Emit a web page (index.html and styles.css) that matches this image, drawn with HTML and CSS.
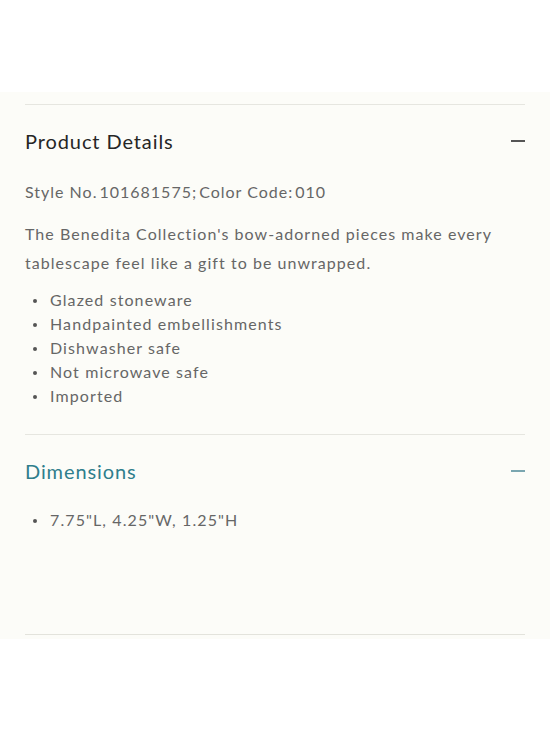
FILE: index.html
```html
<!DOCTYPE html>
<html>
<head>
<meta charset="utf-8">
<link rel="stylesheet" href="styles.css">
</head>
<body>
<div class="top"></div>
<div class="panel">
  <section class="acc acc-first">
    <div class="acc-head">
      <h2 class="acc-title">Product Details</h2>
      <span class="minus"></span>
    </div>
    <p class="style-no">Style No.&#8202;101681575;&#8202;Color Code:&#8202;010</p>
    <p class="desc">The Benedita Collection's bow-adorned pieces make every tablescape feel like a gift to be unwrapped.</p>
    <ul class="bullets">
      <li>Glazed stoneware</li>
      <li>Handpainted embellishments</li>
      <li>Dishwasher safe</li>
      <li>Not microwave safe</li>
      <li>Imported</li>
    </ul>
  </section>
  <section class="acc acc-second">
    <div class="acc-head">
      <h2 class="acc-title teal">Dimensions</h2>
      <span class="minus minus-teal"></span>
    </div>
    <ul class="bullets dims">
      <li>7.75"L, 4.25"W, 1.25"H</li>
    </ul>
  </section>
  <div class="acc-end"></div>
</div>
</body>
</html>
```
FILE: styles.css
```css
* { box-sizing: border-box; }
html, body { margin: 0; padding: 0; background: #ffffff; }
body { font-family: Lato, "Noto Sans", sans-serif; color: #666; }
.top { height: 92px; }
.panel {
  background: #fcfcf8;
  padding: 12px 25px 0;
}
.acc { border-top: 1px solid #e6e6e0; }
.acc-first { padding: 22px 0 26px; }
.acc-second { padding: 22px 0 102px; }
.acc-end { border-top: 1px solid #e3e3dc; height: 5px; }
.acc-head {
  display: flex;
  align-items: center;
  justify-content: space-between;
  height: 28px;
}
.acc-title {
  margin: 0;
  font-size: 20px;
  line-height: 28px;
  font-weight: 400;
  color: #262626;
  letter-spacing: 0.9px;
}
.acc-title.teal { color: #2f7e8c; }
.minus {
  width: 14px;
  height: 1.5px;
  background: #555;
}
.minus-teal { background: #7aa6b0; }
.style-no {
  margin: 25px 0 0;
  font-size: 16px;
  line-height: 24px;
  letter-spacing: 1px;
}
.desc {
  margin: 15px 0 0;
  font-size: 16px;
  line-height: 29px;
  letter-spacing: 1.05px;
}
.bullets {
  list-style: none;
  margin: 11px 0 0;
  padding: 0;
}
.bullets li {
  position: relative;
  padding-left: 25px;
  font-size: 16px;
  line-height: 24px;
  letter-spacing: 1.1px;
}
.bullets li::before {
  content: "";
  position: absolute;
  left: 8px;
  top: 11px;
  width: 4px;
  height: 4px;
  border-radius: 50%;
  background: #555;
}
.dims { margin-top: 23px; }
```
